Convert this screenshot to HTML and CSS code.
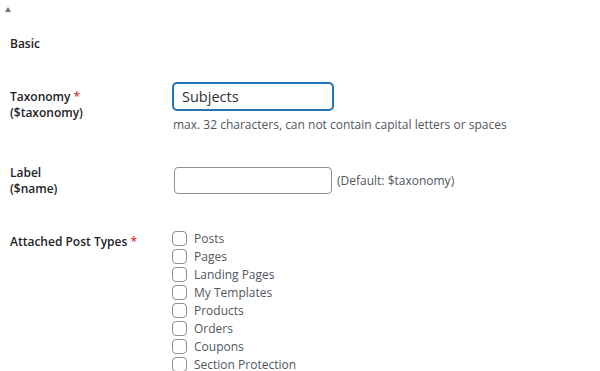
FILE: index.html
```html
<!DOCTYPE html>
<html>
<head>
<meta charset="utf-8">
<link rel="stylesheet" href="styles.css">
</head>
<body>
<div class="toggle"><span class="tri"></span></div>
<h3 class="section">Basic</h3>
<div class="row row-tax">
  <div class="lbl">Taxonomy <span class="req">*</span><br>($taxonomy)</div>
  <div class="field">
    <input class="txt focus" type="text" value="Subjects">
    <p class="desc">max. 32 characters, can not contain capital letters or spaces</p>
  </div>
</div>
<div class="row row-label">
  <div class="lbl">Label<br>($name)</div>
  <div class="field inline">
    <input class="txt" type="text" value="">
    <span class="hint">(Default: $taxonomy)</span>
  </div>
</div>
<div class="row row-types">
  <div class="lbl">Attached Post Types <span class="req">*</span></div>
  <div class="field">
    <ul class="checks">
      <li><span class="cb"></span>Posts</li>
      <li><span class="cb"></span>Pages</li>
      <li><span class="cb"></span>Landing Pages</li>
      <li><span class="cb"></span>My Templates</li>
      <li><span class="cb"></span>Products</li>
      <li><span class="cb"></span>Orders</li>
      <li><span class="cb"></span>Coupons</li>
      <li><span class="cb"></span>Section Protection</li>
    </ul>
  </div>
</div>
</body>
</html>
```

FILE: styles.css
```css
html, body {
  margin: 0;
  padding: 0;
  background: #fff;
  overflow: hidden;
}
body {
  font-family: "Open Sans", "Noto Sans", sans-serif;
  font-size: 12px;
  color: #1d2327;
  width: 600px;
  height: 371px;
}
.toggle {
  height: 20px;
  padding-left: 5px;
  padding-top: 7px;
  box-sizing: border-box;
}
.tri {
  display: block;
  width: 0;
  height: 0;
  border-left: 3px solid transparent;
  border-right: 3px solid transparent;
  border-bottom: 5px solid #72777c;
}
.section {
  margin: 16px 0 0 10px;
  font-size: 12px;
  font-weight: 600;
  line-height: 16px;
}
.row {
  display: flex;
  padding-left: 10px;
}
.lbl {
  width: 163px;
  flex: none;
  font-weight: 600;
  line-height: 16px;
}
.req {
  color: #d63638;
}
.field {
  flex: 1;
}
.row-tax {
  margin-top: 29px;
}
.row-tax .lbl {
  padding-top: 8px;
}
.row-tax .txt {
  margin-top: 2px;
}
.txt {
  display: block;
  box-sizing: border-box;
  width: 160px;
  height: 27px;
  margin: 0;
  padding: 0 8px;
  border: 1px solid #8c8f94;
  border-radius: 4px;
  font: inherit;
  font-size: 14.5px;
  color: #2c3338;
  background: #fff;
  outline: none;
}
.txt.focus {
  border-color: #2271b1;
  box-shadow: 0 0 0 1px #2271b1;
}
.desc {
  margin: 7px 0 0 0;
  color: #50575e;
  line-height: 16px;
}
.row-label {
  margin-top: 30px;
}
.row-label .lbl {
  padding-top: 2px;
}
.inline {
  display: flex;
  align-items: center;
  padding-left: 1px;
}
.inline .txt {
  width: 158px;
  height: 27px;
}
.hint {
  margin-left: 5px;
  color: #50575e;
}
.row-types {
  margin-top: 33px;
}
.row-types .lbl {
  padding-top: 4px;
}
.checks {
  list-style: none;
  margin: -1px 0 0 0;
  padding: 0;
}
.checks li {
  display: flex;
  align-items: center;
  height: 18px;
  color: #50575e;
}
.cb {
  box-sizing: border-box;
  width: 15px;
  height: 15px;
  border: 1px solid #8c8f94;
  border-radius: 4px;
  margin-right: 7px;
  margin-left: -1px;
  background: #fff;
}
```
